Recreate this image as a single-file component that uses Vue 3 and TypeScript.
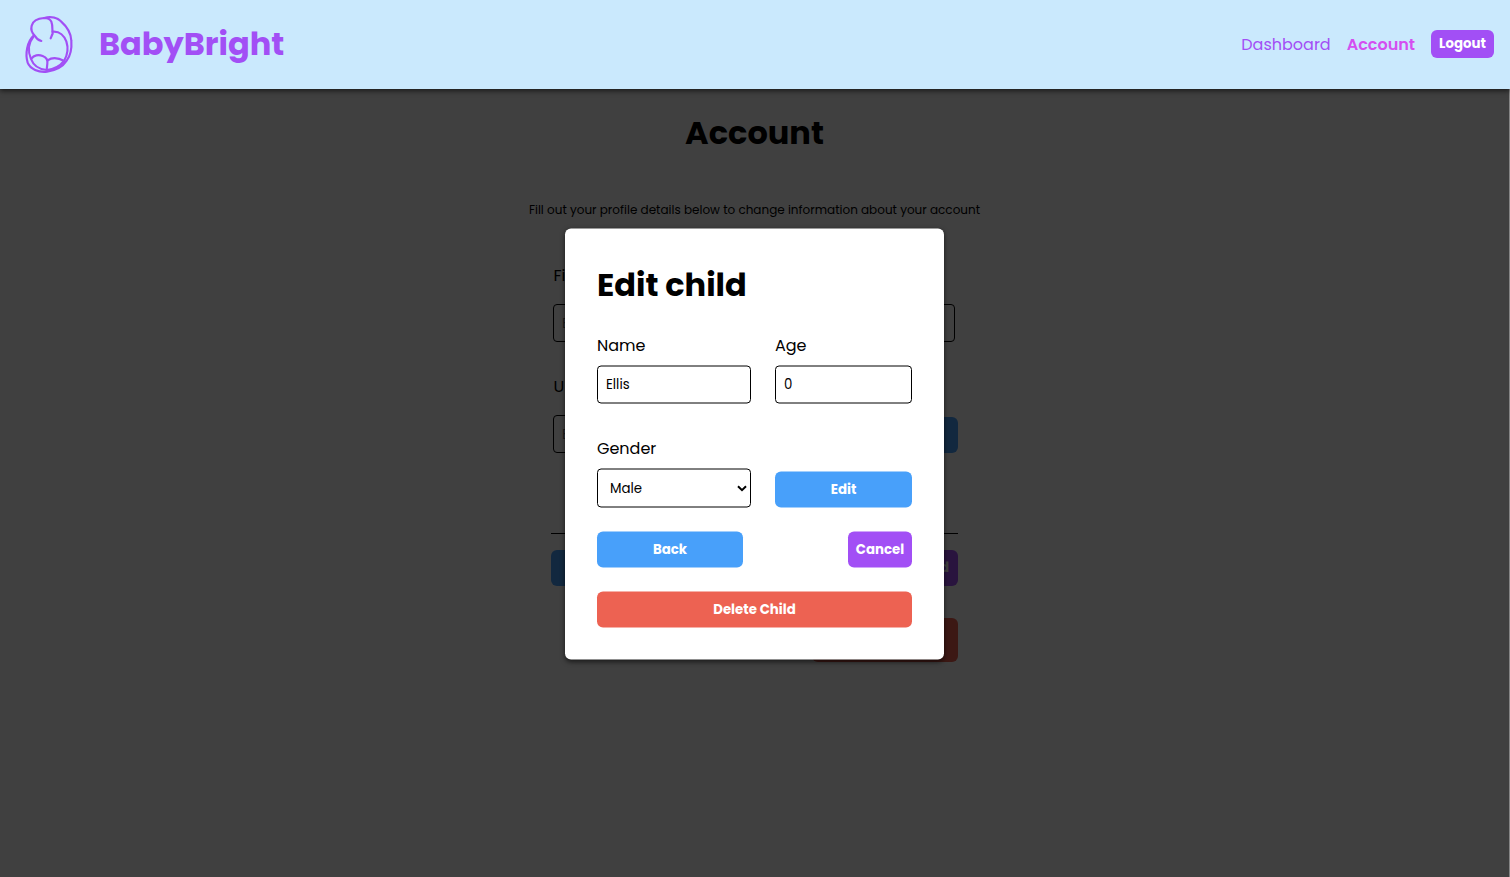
<script setup lang="ts">
import { ref } from 'vue'

const name = ref('Ellis')
const age = ref('0')
const gender = ref('Male')
</script>

<template>
  <div class="page">
    <header class="header">
      <svg class="logo" viewBox="0 0 216 228" aria-hidden="true">
        <g fill="none" stroke="#a24ff5" stroke-width="6.5" stroke-linecap="round" stroke-linejoin="round">
          <path d="M82 105C72 102 67 98 63 90C54 81 50 70 53 59C57 44 72 37 90 36C101 36 109 40 112 47C117 60 114 72 116 83C113 88 112 93 110 97" />
          <path d="M91 36C112 30 131 36 141 46C158 61 171 78 172 104C174 132 168 151 158 164C145 184 127 193 99 197C74 200 48 189 41 170C33 145 39 107 59 89" />
          <path d="M116 77C137 75 151 90 157 106C164 127 160 148 150 165C137 182 119 190 98 192C75 190 58 178 51 159C41 137 43 111 59 91" />
          <path d="M53 157C59 148 73 145 86 150C97 154 102 160 100 173L98 192" />
          <path d="M101 163C114 154 132 155 151 165" />
        </g>
      </svg>
      <div class="brand">BabyBright</div>
      <nav class="nav">
        <a class="link">Dashboard</a>
        <a class="link active">Account</a>
        <button class="btn purple logout">Logout</button>
      </nav>
    </header>

    <main class="account">
      <h1 class="heading">Account</h1>
      <p class="hint">Fill out your profile details below to change information about your account</p>
      <div class="profile">
        <label class="plabel">Fi</label>
        <div class="pinput">E</div>
        <label class="plabel second">U</label>
        <div class="prow">
          <div class="pinput short">E</div>
          <button class="btn blue save"></button>
        </div>
        <hr class="rule" />
        <div class="actions">
          <button class="btn blue"></button>
          <button class="btn purple">d</button>
        </div>
        <button class="btn red remove"></button>
      </div>
    </main>

    <div class="overlay"></div>
    <section class="modal">
      <h1 class="title">Edit child</h1>
      <div class="grid">
        <div class="field">
          <label>Name</label>
          <input v-model="name" />
        </div>
        <div class="field">
          <label>Age</label>
          <input v-model="age" />
        </div>
        <div class="field">
          <label>Gender</label>
          <div class="select">
            <span>{{ gender }}</span>
            <svg viewBox="0 0 10 8" width="10" height="8"><path d="M1 1.7L5 5.7L9 1.7" fill="none" stroke="#000" stroke-width="2" /></svg>
          </div>
        </div>
        <button class="btn blue edit">Edit</button>
      </div>
      <div class="row">
        <button class="btn blue back">Back</button>
        <button class="btn purple cancel">Cancel</button>
      </div>
      <button class="btn red delete">Delete Child</button>
    </section>
  </div>
</template>

<style>
body { background: #fff; overflow: hidden; }
</style>

<style scoped>
.page, .page * { box-sizing: border-box; }
.page { position: relative; height: 877px; overflow: hidden; background: linear-gradient(to right, #fff 1509px, #858585 1509px); font-family: Poppins, Inter, sans-serif; font-size: 16px; color: #000; }
button { border: 0; font-family: inherit; }
.header { position: relative; z-index: 2; height: 89px; display: flex; align-items: center; padding: 0 16px 1px 14px; background: #cae9fd; box-shadow: 0 2px 5px rgba(0, 0, 0, .6); }
.logo { width: 72px; height: 76px; flex: none; }
.brand { margin-left: 13px; color: #a24ff5; font-size: 32px; font-weight: 700; line-height: 48px; }
.nav { margin-left: auto; display: flex; align-items: center; gap: 16px; color: #a24ff5; }
.link { line-height: 24px; padding-top: 1px; white-space: nowrap; }
.active { font-weight: 600; color: #d44ff0; }
.btn { height: 36px; display: flex; align-items: center; justify-content: center; border-radius: 6px; color: #fff; font-size: 13.33px; font-weight: 700; padding: 0; white-space: nowrap; }
.blue { background: #48a0fa; }
.purple { background: #a24ff5; }
.red { background: #ed6252; }
.logout { width: 63px; height: 28px; }
.account { width: 1509px; display: flex; flex-direction: column; align-items: center; }
.heading { margin: 20px 0 0; font-size: 32px; line-height: 48px; }
.hint { margin: 44px 0 0; font-size: 12px; line-height: 18px; white-space: nowrap; }
.profile { width: 407px; margin: 45px 0 0; display: flex; flex-direction: column; }
.plabel { margin-left: 2.5px; line-height: 24px; }
.pinput { width: 402px; height: 38px; margin: 16px 0 0 2px; border: 1px solid #000; border-radius: 4px; padding: 1px 8px 0; line-height: 36px; font-size: 13.33px; color: #757575; }
.second { margin-top: 33px; }
.prow { display: flex; justify-content: space-between; }
.short { width: 190px; }
.save { width: 137px; margin-top: 18px; }
.rule { width: 100%; height: 1px; border: 0; background: #000; margin: 80px 0 16px; }
.actions { display: flex; justify-content: space-between; }
.actions .btn { width: 146px; }
.actions .purple { justify-content: flex-end; padding-right: 9px; }
.remove { width: 146px; height: 44px; margin: 32px 0 0 auto; }
.overlay { position: absolute; inset: 89px 1px 0 0; background: rgba(0, 0, 0, .75); z-index: 1; }
.modal { position: absolute; z-index: 3; left: 565px; top: 444px; transform: translateY(-50%); width: 379px; height: 431px; padding: 32px; background: #fff; border-radius: 6px; box-shadow: 0 2px 5px rgba(0, 0, 0, .6); }
.title { margin: 0; font-size: 32px; line-height: 48px; white-space: nowrap; }
.grid { margin-top: 25px; display: grid; grid-template-columns: 154px 137px; column-gap: 24px; row-gap: 33px; }
.field { display: flex; flex-direction: column; gap: 8px; }
.field label { line-height: 24px; align-self: flex-start; }
.field input, .select { width: 100%; height: 38px; border: 1px solid #000; border-radius: 4px; background: #fff; font: 13.33px Poppins, Inter, sans-serif; color: #000; padding: 0 8px; outline: none; }
.select { height: 39px; display: flex; align-items: center; justify-content: space-between; padding: 0 3px 0 12px; }
.edit { align-self: end; }
.row { margin-top: 24px; display: flex; justify-content: space-between; }
.back { width: 146px; }
.cancel { width: 64px; }
.delete { width: 100%; margin-top: 24px; }
</style>
